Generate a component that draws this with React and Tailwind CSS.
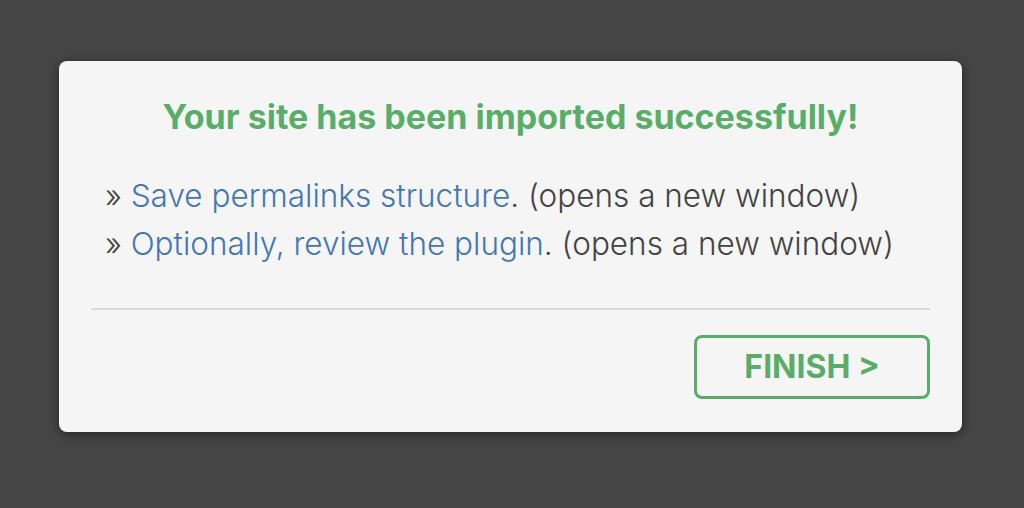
export default function App() {
  return (
    <div className="w-[1024px] h-[508px] bg-[#464646] pt-[61px] pl-[59px]" style={{ fontFamily: 'Inter, "Noto Sans", sans-serif' }}>
      <div className="w-[903px] h-[371px] bg-[#f5f5f5] rounded-[8px] shadow-[0_2px_12px_rgba(0,0,0,0.5)] px-[32px] flex flex-col">
        <h1 className="mt-[36px] text-center text-[34px] leading-[40px] font-bold text-[#5aad69]">
          Your site has been imported successfully!
        </h1>
        <ul className="mt-[35px] pl-[14px] text-[31.5px] leading-[48px] font-light text-[#444]">
          <li>
            » <a className="text-[#4577b3]">Save permalinks structure</a>. (opens a new window)
          </li>
          <li>
            » <a className="text-[#4577b3]">Optionally, review the plugin</a>. (opens a new window)
          </li>
        </ul>
        <div className="mt-[40px] h-[2px] bg-[#d9d9d9]" />
        <div className="flex justify-end mt-[25px]">
          <button className="w-[236px] h-[64px] border-[3px] border-[#5aad69] rounded-[8px] text-[#5aad69] text-[32px] font-bold">
            FINISH &gt;
          </button>
        </div>
      </div>
    </div>
  )
}
